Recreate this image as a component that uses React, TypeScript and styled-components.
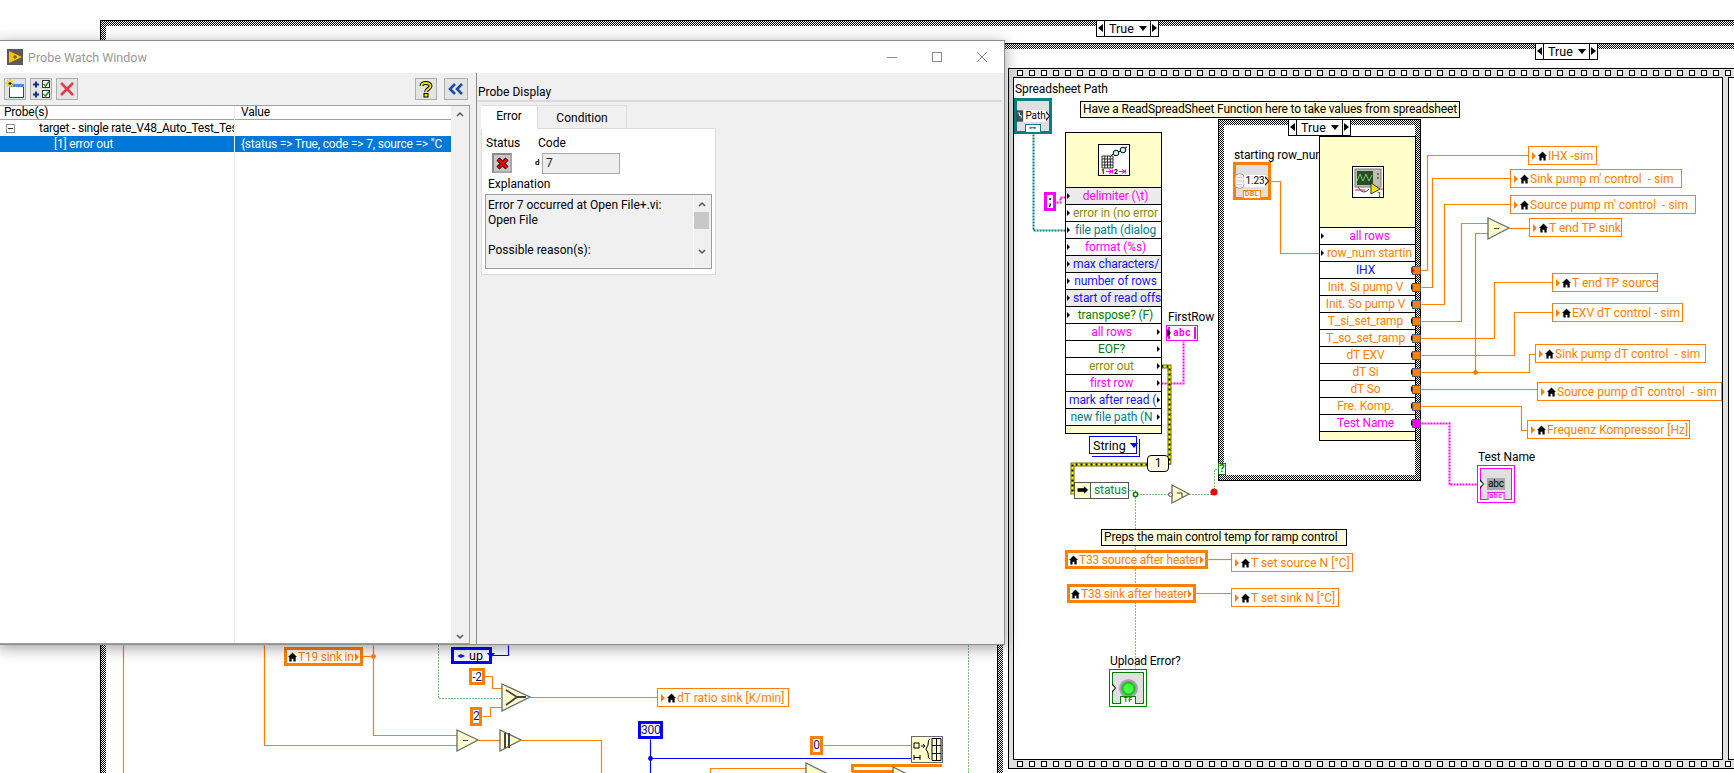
import React from "react";
import styled, { createGlobalStyle, css } from "styled-components";

const UI_FONT = `Roboto, "Noto Sans", sans-serif`;
const ORANGE = "#ff7f00";
const MAGENTA = "#ff00ff";
const BLUE = "#1414ff";
const GREEN = "#007f00";
const TEAL = "#008080";
const OLIVE = "#8c8c00";
const CHECKER = "repeating-conic-gradient(#000 0 25%, #fff 0 50%) 0 0 / 2px 2px";

const GlobalStyle = createGlobalStyle`
  html, body { margin: 0; padding: 0; background: #fff; overflow: hidden; }
  body { font-family: ${UI_FONT}; font-size: 12px; color: #000; }
`;

// anything on the block diagram sits at its own place on the canvas
type At = { $x: number; $y: number };
type Box = At & { $w?: number; $h?: number };
const placed = css<Box>`
  position: absolute;
  left: ${(p) => p.$x}px;
  top: ${(p) => p.$y}px;
  ${(p) => (p.$w !== undefined ? `width: ${p.$w}px;` : "")}
  ${(p) => (p.$h !== undefined ? `height: ${p.$h}px;` : "")}
  box-sizing: border-box;
`;

// LabVIEW's app font runs a little narrow
const diagramText = css`
  font-size: 12px;
  letter-spacing: -0.1px;
`;

const Canvas = styled.div`
  position: relative;
  width: 1734px;
  height: 773px;
  overflow: hidden;
  background: #fff;
`;

// case structure frame
const CaseFrame = styled.div<Box>`
  ${placed}
  border: 1px solid #000;
  background: ${CHECKER};
  &::after {
    content: "";
    position: absolute;
    inset: 5px;
    background: #fff;
  }
`;

// sequence structure
const FilmFrame = styled.div<Box>`
  ${placed}
  display: flex;
  flex-direction: column;
  border: 1px solid #000;
  background: #e0e0e0;
`;

const FilmBand = styled.div`
  height: 8px;
  flex: none;
  background-image:
    repeating-linear-gradient(90deg, #fff 0 4px, transparent 4px 12px),
    repeating-linear-gradient(90deg, #000 0 6px, transparent 6px 12px);
  background-size: 100% 4px, 100% 6px;
  background-position: 9px 2px, 8px 1px;
  background-repeat: no-repeat;
`;

const FilmPanes = styled.div`
  flex: 1;
  display: flex;
  gap: 5px;
  padding: 0 5px 0 4px;
`;

const FilmPane = styled.div<{ $w: number }>`
  width: ${(p) => p.$w}px;
  flex: none;
  box-sizing: border-box;
  border: 1px solid #000;
  background: #fff;
`;

const CaseSelector = styled.div<At>`
  ${placed}
  display: flex;
  height: 17px;
  border: 1px solid #000;
  background: #fff;
  font-size: 12.5px;
  line-height: 15px;
`;

const SelectorStep = styled.span<{ $dir: "left" | "right" }>`
  width: 7px;
  flex: none;
  position: relative;
  ${(p) => (p.$dir === "left" ? "border-right: 1px solid #000;" : "border-left: 1px solid #000;")}
  &::after {
    content: "";
    position: absolute;
    top: 3px;
    left: 1px;
    border-block: 4px solid transparent;
    ${(p) => (p.$dir === "left" ? "border-right: 5px solid #000;" : "border-left: 5px solid #000;")}
  }
`;

const SelectorValue = styled.span`
  width: 45px;
  padding-left: 4px;
  box-sizing: border-box;
  display: flex;
  align-items: center;
  justify-content: space-between;
  padding-right: 3px;
`;

const DownMark = styled.i<{ $color?: string }>`
  display: block;
  flex: none;
  border-inline: 4px solid transparent;
  border-top: 5px solid ${(p) => p.$color ?? "#000"};
`;

const Comment = styled.div<Box>`
  ${placed}
  ${diagramText}
  letter-spacing: -0.15px;
  background: #ffffdc;
  border: 1px solid #000;
  line-height: 15px;
  padding-left: 2px;
  white-space: nowrap;
  overflow: hidden;
`;

const FreeLabel = styled.div<At>`
  ${placed}
  ${diagramText}
  line-height: 16px;
  white-space: nowrap;
`;

// function / subVI in expanded view
const Node = styled.div<Box>`
  ${placed}
  ${diagramText}
  display: flex;
  flex-direction: column;
  border: 1px solid #000;
  background: #ffffcc;
`;

const NodeHead = styled.div<{ $h: number }>`
  height: ${(p) => p.$h}px;
  flex: none;
  display: flex;
  align-items: center;
  justify-content: center;
  border-bottom: 1px solid #000;
  box-sizing: border-box;
`;

const NodeIcon = styled.div`
  width: 32px;
  height: 32px;
  background: #fff;
  border: 1px solid #000;
  box-sizing: border-box;
  svg { display: block; }
`;

const TermRow = styled.div<{ $color: string; $shade?: boolean; $out?: boolean }>`
  height: 17px;
  flex: none;
  box-sizing: border-box;
  position: relative;
  border-bottom: 1px solid #000;
  background: ${(p) => (p.$shade ? "#ebebeb" : "#fff")};
  color: ${(p) => p.$color};
  text-align: center;
  line-height: 16px;
  white-space: pre;
  overflow: hidden;
  padding: ${(p) => (p.$out ? "0 7px 0 3px" : "0 3px 0 7px")};
  &::before {
    content: "";
    position: absolute;
    top: 5px;
    ${(p) => (p.$out ? "right: 1px;" : "left: 1px;")}
    border-left: 3px solid #000;
    border-block: 3px solid transparent;
  }
`;

// terminal on the diagram in icon view
const TermIcon = styled.div<Box & { $color: string; $thick?: boolean }>`
  ${placed}
  border: ${(p) => (p.$thick ? 3 : 1)}px solid ${(p) => p.$color};
  padding: ${(p) => (p.$thick ? 0 : 2)}px;
  background: #fff;
`;

const TermFace = styled.div<{ $color: string; $thick?: boolean }>`
  position: relative;
  height: 100%;
  box-sizing: border-box;
  background: #e0e0e0;
  ${(p) => (p.$thick ? "" : `border: 1px solid ${p.$color};`)}
  display: flex;
  align-items: center;
  justify-content: center;
`;

const TermTag = styled.span<{ $color: string }>`
  position: absolute;
  left: 50%;
  bottom: -1px;
  transform: translateX(-50%);
  min-width: 16px;
  height: 8px;
  box-sizing: border-box;
  border: 1px solid ${(p) => p.$color};
  border-bottom: none;
  background: #fff;
  color: ${(p) => p.$color};
  font-size: 7px;
  line-height: 7px;
  font-weight: 700;
  text-align: center;
  letter-spacing: 0.5px;
  padding: 0 1px;
`;

const TermArrow = styled.i<{ $side: "left" | "right" }>`
  position: absolute;
  top: 50%;
  margin-top: -5px;
  ${(p) => (p.$side === "left" ? "left: -1px;" : "right: -1px;")}
  border-block: 5px solid transparent;
  border-left: 4px solid #000;
  &::after {
    content: "";
    position: absolute;
    top: -3px;
    left: -4px;
    border-block: 3px solid transparent;
    border-left: 3px solid #fff;
  }
`;

const ValueChip = styled.span<{ $gray?: boolean; $shift?: number }>`
  background: ${(p) => (p.$gray ? "#a8a8a8" : "#fff")};
  font-size: 10px;
  line-height: 12px;
  padding: 0 1px;
  letter-spacing: -0.1px;
  ${(p) => (p.$shift ? `margin-right: ${p.$shift}px;` : "")}
`;

const Led = styled.span`
  width: 19px;
  height: 19px;
  border-radius: 50%;
  background: radial-gradient(circle, #46ff46 0 28%, #10c010 45%, #9a9a9a 55%, #c6c6c6 85%, transparent 100%);
`;

// local variable, thin border when written to and thick when read
const LocalVar = styled.div<Box & { $read?: boolean }>`
  ${placed}
  display: flex;
  align-items: center;
  gap: 1px;
  height: 19px;
  padding: 0 ${(p) => (p.$read ? 1 : 3)}px;
  border: ${(p) => (p.$read ? 3 : 1)}px solid ${ORANGE};
  background: #fff;
  color: ${ORANGE};
  font-size: 12px;
  letter-spacing: ${(p) => (p.$read ? -0.2 : 0)}px;
  white-space: pre;
`;

const Pointer = styled.i`
  flex: none;
  border-block: 4px solid transparent;
  border-left: 4px solid ${ORANGE};
  margin-right: 1px;
`;

const Constant = styled.div<Box & { $color: string }>`
  ${placed}
  border: 3px solid ${(p) => p.$color};
  background: #fff;
  color: #14147a;
  font-size: 12px;
  line-height: 13px;
  text-align: center;
  letter-spacing: -0.2px;
  overflow: hidden;
`;

const EnumBox = styled.div<Box & { $double?: boolean }>`
  ${placed}
  display: flex;
  align-items: center;
  gap: 4px;
  background: #fff;
  border: ${(p) => (p.$double ? 1 : 3)}px solid #0000ff;
  ${(p) => (p.$double ? "box-shadow: 2px 2px 0 -0px #fff, 3px 3px 0 0 #0000ff;" : "")}
  font-size: 12.5px;
  padding: 0 4px 0 3px;
  justify-content: space-between;
`;

const EnumSpin = styled.span`
  color: #0000ff;
  font-size: 8px;
  line-height: 8px;
`;

const StringSwatch = styled.div<Box>`
  ${placed}
  border: 3px solid ${MAGENTA};
  background: #fff;
  text-align: center;
  font-size: 12px;
  font-weight: 700;
  line-height: 12px;
`;

const ArrayIndicator = styled.div<Box>`
  ${placed}
  border: 1px solid ${MAGENTA};
  padding: 1px;
  background: #fff;
  display: flex;
`;

const ArrayInner = styled.div`
  flex: 1;
  position: relative;
  border-inline: 2px solid ${MAGENTA};
  color: ${MAGENTA};
  font-size: 10px;
  line-height: 12px;
  font-weight: 700;
  text-align: center;
  letter-spacing: 0.5px;
  &::before {
    content: "";
    position: absolute;
    left: -3px;
    top: 2px;
    border-block: 4px solid transparent;
    border-left: 4px solid #000;
  }
`;

const Unbundle = styled.div<Box>`
  ${placed}
  ${diagramText}
  display: flex;
  border: 1px solid #555;
  background: #fff;
  color: #0a8a3a;
`;

const UnbundleHead = styled.span`
  width: 15px;
  flex: none;
  border-right: 1px solid #555;
  background: #ffffcc;
  color: #000;
  font-weight: 700;
  line-height: 14px;
  font-size: 13px;
  text-align: center;
`;

const UnbundleField = styled.span`
  flex: 1;
  padding-left: 3px;
  line-height: 15px;
`;

const CaseNumber = styled.div<Box>`
  ${placed}
  border: 1px solid #000;
  border-radius: 4px;
  background: #ffffe6;
  font-size: 12px;
  line-height: 15px;
  text-align: center;
`;

const ConditionMark = styled.div<Box>`
  ${placed}
  border: 1px solid ${GREEN};
  background: #fff;
  color: ${GREEN};
  font-size: 11px;
  line-height: 10px;
  font-weight: 700;
  text-align: center;
`;

const Drawing = styled.svg`
  position: absolute;
  left: 0;
  top: 0;
`;

// probe watch window
const ProbeWindow = styled.div`
  position: absolute;
  left: -2px;
  top: 40px;
  width: 1007px;
  height: 605px;
  display: flex;
  flex-direction: column;
  box-sizing: border-box;
  background: #fff;
  border: 1px solid #8c8c8c;
  box-shadow: 0 3px 14px rgba(0, 0, 0, 0.38);
`;

const TitleBar = styled.div`
  height: 32px;
  flex: none;
  display: flex;
  align-items: center;
  padding-left: 8px;
  color: #999;
  font-size: 12.5px;
`;

const TitleText = styled.span`
  margin-left: 5px;
  flex: 1;
`;

const WinButton = styled.span`
  width: 45px;
  height: 30px;
  display: flex;
  align-items: center;
  justify-content: center;
  svg { display: block; }
`;

const WinBody = styled.div`
  flex: 1;
  display: flex;
  min-height: 0;
  background: #f0f0f0;
`;

const ProbeList = styled.div`
  width: 472px;
  flex: none;
  display: flex;
  flex-direction: column;
`;

const Toolbar = styled.div`
  height: 32px;
  flex: none;
  display: flex;
  align-items: center;
  box-sizing: border-box;
  padding: 0 3px 0 5px;
  gap: 4px;
`;

const ToolButton = styled.span<{ $ml?: number; $w?: number }>`
  width: ${(p) => p.$w ?? 22}px;
  height: 22px;
  box-sizing: border-box;
  background: #e4e4e4;
  border: 1px solid #adadad;
  display: flex;
  align-items: center;
  justify-content: center;
  ${(p) => (p.$ml ? `margin-left: ${p.$ml}px;` : "")}
  svg { display: block; }
`;

const ProbeTable = styled.div`
  flex: 1;
  display: grid;
  grid-template-columns: 1fr 18px;
  min-height: 0;
  border: 1px solid #a0a0a0;
  border-left: none;
  background: #fff;
  margin-right: 1px;
`;

const TableBody = styled.div`
  background: #fff;
  position: relative;
`;

const TableRow = styled.div<{ $head?: boolean; $active?: boolean }>`
  display: grid;
  grid-template-columns: 236px 1fr;
  height: ${(p) => (p.$head ? 13 : 16)}px;
  line-height: ${(p) => (p.$head ? 13 : 16)}px;
  font-size: 12px;
  letter-spacing: -0.2px;
  white-space: nowrap;
  ${(p) => p.$head && "border-bottom: 1px solid #a0a0a0; box-sizing: content-box;"}
  ${(p) => p.$active && "background: #0078d7; color: #fff;"}
`;

const TableCell = styled.span<{ $pad: number }>`
  padding-left: ${(p) => p.$pad}px;
  overflow: hidden;
  display: flex;
  align-items: center;
  border-right: 1px solid #e8e8e8;
  &:last-child { border-right: none; }
`;

const Expander = styled.span`
  width: 9px;
  height: 9px;
  flex: none;
  box-sizing: border-box;
  border: 1px solid #919191;
  margin-right: 24px;
  position: relative;
  &::after {
    content: "";
    position: absolute;
    left: 1px;
    right: 1px;
    top: 3px;
    height: 1px;
    background: #333;
  }
`;

const ColumnRule = styled.i`
  position: absolute;
  left: 235px;
  top: 0;
  bottom: 0;
  width: 1px;
  background: #ececec;
`;

const ScrollTrack = styled.div`
  display: flex;
  flex-direction: column;
  align-items: center;
  justify-content: space-between;
  padding: 5px 0 3px;
  background: #f0f0f0;
  svg { display: block; }
`;

const Splitter = styled.div`
  width: 5px;
  flex: none;
  border-right: 1px solid #8c8c8c;
`;

const DisplayPane = styled.div`
  flex: 1;
  display: flex;
  flex-direction: column;
  min-width: 0;
`;

const DisplayTitle = styled.div`
  height: 29px;
  flex: none;
  box-sizing: border-box;
  border-bottom: 2px solid #d9d9d9;
  font-size: 12px;
  line-height: 38px;
  padding-left: 1px;
  margin-right: 2px;
  overflow: hidden;
  white-space: nowrap;
`;

const TabStrip = styled.div`
  display: flex;
  margin: 3px 0 0 4px;
  height: 24px;
  flex: none;
`;

const Tab = styled.span<{ $active?: boolean; $w: number }>`
  width: ${(p) => p.$w}px;
  box-sizing: border-box;
  text-align: center;
  font-size: 12px;
  line-height: ${(p) => (p.$active ? 20 : 24)}px;
  background: ${(p) => (p.$active ? "#fff" : "#f0f0f0")};
  border: 1px solid #dcdcdc;
  border-bottom: none;
  ${(p) => p.$active && "border-right: none; border-left: none; position: relative; z-index: 1;"}
`;

const TabPanel = styled.div`
  width: 235px;
  height: 147px;
  margin-left: 4px;
  margin-top: -1px;
  box-sizing: border-box;
  background: #fff;
  border: 1px solid #dcdcdc;
  padding: 6px 3px 0 3px;
  font-size: 12px;
`;

const FieldHeads = styled.div`
  display: grid;
  grid-template-columns: 52px 1fr;
  line-height: 16px;
  padding-left: 1px;
`;

const FieldValues = styled.div`
  display: flex;
  align-items: center;
  height: 22px;
  margin-top: 1px;
  padding-left: 7px;
`;

const StatusLight = styled.span`
  width: 20px;
  height: 20px;
  flex: none;
  box-sizing: border-box;
  border: 2px solid;
  border-color: #8a8a8a #a8a8a8 #a8a8a8 #8a8a8a;
  background: #c8c8c8;
  display: flex;
  align-items: center;
  justify-content: center;
`;

const RadixMark = styled.span`
  margin-left: 23px;
  width: 7px;
  font-size: 8px;
  line-height: 8px;
  font-weight: 700;
`;

const CodeField = styled.span`
  width: 78px;
  height: 21px;
  box-sizing: border-box;
  background: #eee;
  border: 1px solid #a8a8a8;
  padding-left: 3px;
  line-height: 19px;
  color: #222;
`;

const FieldCaption = styled.div`
  line-height: 16px;
  height: 18px;
  box-sizing: border-box;
  padding: 2px 0 0 3px;
`;

const ExplainBox = styled.div`
  height: 75px;
  margin-top: 2px;
  box-sizing: border-box;
  display: flex;
  background: #f0f0f0;
  border: 1px solid #9c9c9c;
  line-height: 15px;
  white-space: pre;
`;

const ExplainText = styled.div`
  flex: 1;
  padding: 3px 0 0 2px;
`;

const ExplainScroll = styled.div`
  width: 18px;
  flex: none;
  border-left: 1px solid #fff;
  display: flex;
  flex-direction: column;
  align-items: flex-start;
  padding-top: 6px;
  box-sizing: border-box;
  svg { display: block; margin-left: 4px; }
`;

const ExplainThumb = styled.i`
  display: block;
  width: 15px;
  height: 17px;
  margin: 5px 0 20px;
  background: #c8c8c8;
`;

// icons
const House = () => (
  <svg width="9" height="10" viewBox="0 0 10 10" style={{ flex: "none" }}>
    <path d="M5 0 L10 5 L8.5 5 L8.5 10 L6 10 L6 7 L4 7 L4 10 L1.5 10 L1.5 5 L0 5 Z" fill="#000" />
  </svg>
);

const Chevron = ({ up, stroke = "#555" }: { up?: boolean; stroke?: string }) => (
  <svg width="8" height="6" viewBox="0 0 8 6">
    <path d={up ? "M1 5 L4 2 L7 5" : "M1 1 L4 4 L7 1"} fill="none" stroke={stroke} strokeWidth="1.5" />
  </svg>
);

const LabviewGlyph = () => (
  <svg width="16" height="16" viewBox="0 0 16 16">
    <rect width="16" height="16" fill="#5a5a5a" />
    <path d="M2 2 L15 8 L2 14 Z" fill="#f5c400" />
    <path d="M6 8 H10 M8 6 V10" stroke="#5a4a00" strokeWidth="1" />
  </svg>
);

const NewProbeGlyph = () => (
  <svg width="20" height="20" viewBox="0 0 20 20">
    <rect x="4.5" y="5.5" width="14" height="13" fill="#fff" stroke="#1a4fa0" />
    <rect x="4" y="5" width="15" height="3" fill="#3f8fe0" />
    <path d="M5 0 V9 M0.5 4.5 H9.5 M2 1.5 L8 7.5 M8 1.5 L2 7.5" stroke="#e6d800" strokeWidth="1.3" />
    <path d="M5 3 V6 M3.5 4.5 H6.5" stroke="#000" strokeWidth="1" />
  </svg>
);

const AddChecksGlyph = () => (
  <svg width="20" height="20" viewBox="0 0 20 20">
    <g fill="none" strokeWidth="2">
      <path d="M2 5.5 H8 M5 2.5 V8.5 M2 15.5 H8 M5 12.5 V18.5" stroke="#10308c" />
    </g>
    <rect x="11.5" y="1.5" width="7" height="7" fill="#fff" stroke="#333" />
    <rect x="11.5" y="11.5" width="7" height="7" fill="#fff" stroke="#333" />
    <path d="M12.5 5 L14.5 7 L18 2.5 M12.5 15 L14.5 17 L18 12.5" fill="none" stroke="#12a012" strokeWidth="1.6" />
  </svg>
);

const RemoveGlyph = () => (
  <svg width="16" height="16" viewBox="0 0 16 16">
    <path d="M2 2 L14 14 M14 2 L2 14" stroke="#e8384c" strokeWidth="2.6" />
  </svg>
);

const HelpGlyph = () => (
  <svg width="18" height="18" viewBox="0 0 18 18">
    <path
      d="M4.5 6 C4.5 2.2 13.5 2 13.5 6 C13.5 9 9 9 9 12"
      fill="none"
      stroke="#000"
      strokeWidth="4"
    />
    <path
      d="M4.5 6 C4.5 2.2 13.5 2 13.5 6 C13.5 9 9 9 9 12"
      fill="none"
      stroke="#f2e200"
      strokeWidth="2"
    />
    <rect x="7" y="13.5" width="4" height="3.5" fill="#f2e200" stroke="#000" />
  </svg>
);

const CollapseGlyph = () => (
  <svg width="16" height="14" viewBox="0 0 16 14">
    <path d="M7 2 L2 7 L7 12 M14 2 L9 7 L14 12" fill="none" stroke="#1c4ea8" strokeWidth="2.6" />
  </svg>
);

const ErrorCross = () => (
  <svg width="13" height="13" viewBox="0 0 13 13">
    <path d="M2 2 L11 11 M11 2 L2 11" stroke="#000" strokeWidth="4.4" />
    <path d="M2 2 L11 11 M11 2 L2 11" stroke="#f00000" strokeWidth="2.8" />
  </svg>
);

const ReadSheetIcon = () => (
  <svg width="30" height="30" viewBox="0 0 30 30">
    <path d="M3 11 H14 M3 14 H14 M3 17 H14 M3 20 H14 M3 23 H14 M3 11 V23 M5.75 11 V23 M8.5 11 V23 M11.25 11 V23 M14 11 V23" stroke="#000" strokeWidth="0.8" />
    <circle cx="17" cy="8" r="2.8" fill="#bff4f4" stroke="#000" />
    <circle cx="24" cy="5" r="2.8" fill="#bff4f4" stroke="#000" />
    <path d="M19.5 7 L21.5 6 M14 9 L12 11 M26 3 L28 2" stroke="#000" />
    <text x="2" y="29" fontSize="7" fontFamily={UI_FONT} fontWeight="700">1</text>
    <path d="M7 26.5 H13 M10 24.5 L13 26.5 L10 28.5 M13.5 24.5 V28.5" stroke="#f0f" fill="none" />
    <text x="15" y="29" fontSize="7" fontFamily={UI_FONT} fontWeight="700">2</text>
    <path d="M20 26.5 H26 M23 24.5 L26 26.5 L23 28.5 M26.5 24.5 V28.5" stroke="#f0f" fill="none" />
  </svg>
);

const SubViIcon = () => (
  <svg width="30" height="30" viewBox="0 0 30 30">
    <rect x="2" y="2" width="26" height="18" fill="#c0c0b0" stroke="#777" />
    <rect x="4" y="4" width="16" height="14" fill="#2e4a28" />
    <path d="M4 14 L7 7 L10 14 L13 7 L16 14 L19 8" fill="none" stroke="#5fdc5f" />
    <circle cx="25" cy="7" r="1" fill="#555" />
    <circle cx="25" cy="11" r="1" fill="#555" />
    <path d="M5 20 Q10 29 16 22" fill="none" stroke="#2030c0" />
    <path d="M2 23 H12" stroke="#d02020" />
    <path d="M18 16 L27 22 L18 27 Z" fill="#f2e400" stroke="#333" />
    <path d="M27 22 H30" stroke="#d02020" />
    <text x="24" y="30" fontSize="8" fontFamily={UI_FONT}>1</text>
  </svg>
);

const PathGlyph = () => (
  <svg width="7" height="12" viewBox="0 0 8 13" style={{ flex: "none", marginRight: 1 }}>
    <rect width="8" height="13" fill="#33595c" />
    <path d="M2 3 H4 V6 H6 V9" fill="none" stroke="#fff" />
  </svg>
);

const NumSpin = () => (
  <svg width="9" height="16" viewBox="0 0 10 16" style={{ flex: "none" }}>
    <rect width="10" height="16" rx="4" fill="#f4f4f4" stroke="#9a9a9a" />
    <path d="M2 4 H8 M2 8 H8 M2 12 H8" stroke="#c4c4c4" />
  </svg>
);

const READ_TERMINALS = [
  { label: "delimiter (\\t)", color: MAGENTA, shade: true },
  { label: "error in (no error", color: OLIVE },
  { label: "file path (dialog", color: TEAL },
  { label: "format (%s)", color: MAGENTA },
  { label: "max characters/", color: BLUE, shade: true },
  { label: "number of rows", color: BLUE },
  { label: "start of read offs", color: BLUE, shade: true },
  { label: "transpose? (F)", color: GREEN },
  { label: "all rows", color: MAGENTA, out: true },
  { label: "EOF?", color: GREEN, out: true },
  { label: "error out", color: OLIVE, out: true },
  { label: "first row", color: MAGENTA, out: true },
  { label: "mark after read (", color: BLUE, out: true },
  { label: "new file path (N", color: TEAL, out: true },
];

const SUB_TERMINALS = [
  { label: "all rows", color: MAGENTA },
  { label: "row_num startin", color: ORANGE },
  { label: "IHX", color: BLUE, out: true },
  { label: "Init. Si pump V", color: ORANGE, out: true },
  { label: "Init. So pump V", color: ORANGE, out: true },
  { label: "T_si_set_ramp", color: ORANGE, out: true },
  { label: "T_so_set_ramp", color: ORANGE, out: true },
  { label: "dT EXV", color: ORANGE, out: true },
  { label: "dT Si", color: ORANGE, out: true },
  { label: "dT So", color: ORANGE, out: true },
  { label: "Fre. Komp.", color: ORANGE, out: true },
  { label: "Test Name", color: MAGENTA, out: true },
];

const WRITE_LOCALS = [
  { label: "IHX -sim", x: 1528, y: 146, w: 69 },
  { label: "Sink pump m' control  - sim", x: 1510, y: 169, w: 172 },
  { label: "Source pump m' control  - sim", x: 1510, y: 195, w: 186 },
  { label: "T end TP sink", x: 1529, y: 218, w: 93 },
  { label: "T end TP source", x: 1552, y: 273, w: 106 },
  { label: "EXV dT control - sim", x: 1552, y: 303, w: 131 },
  { label: "Sink pump dT control  - sim", x: 1535, y: 344, w: 171 },
  { label: "Source pump dT control  - sim", x: 1537, y: 382, w: 185 },
  { label: "Frequenz Kompressor [Hz]", x: 1527, y: 420, w: 163 },
  { label: "T set source N [°C]", x: 1231, y: 553, w: 122 },
  { label: "T set sink N [°C]", x: 1231, y: 588, w: 108 },
  { label: "dT ratio sink [K/min]", x: 657, y: 688, w: 132 },
];

const READ_LOCALS = [
  { label: "T33 source after heater", x: 1065, y: 550, w: 143 },
  { label: "T38 sink after heater", x: 1067, y: 584, w: 129 },
  { label: "T19 sink in", x: 284, y: 647, w: 79 },
];

type Pt = [number, number];

const ORANGE_WIRES: Pt[][] = [
  [[1271, 181], [1280, 181], [1280, 253], [1319, 253]],
  [[1421, 270], [1427, 270], [1427, 155], [1528, 155]],
  [[1421, 287], [1432, 287], [1432, 178], [1510, 178]],
  [[1421, 304], [1444, 304], [1444, 204], [1510, 204]],
  [[1421, 321], [1461, 321], [1461, 223], [1488, 223]],
  [[1421, 338], [1494, 338], [1494, 282], [1552, 282]],
  [[1421, 355], [1514, 355], [1514, 312], [1552, 312]],
  [[1421, 372], [1529, 372], [1529, 354], [1535, 354]],
  [[1475, 372], [1475, 233], [1488, 233]],
  [[1509, 228], [1529, 228]],
  [[1421, 389], [1537, 389]],
  [[1421, 406], [1521, 406], [1521, 430], [1527, 430]],
  [[1208, 559], [1231, 559]],
  [[1196, 593], [1231, 593]],
  [[363, 656], [373, 656]],
  [[373, 645], [373, 735], [457, 735]],
  [[264, 645], [264, 745], [457, 745]],
  [[123, 645], [123, 773]],
  [[478, 740], [500, 740]],
  [[521, 740], [601, 740], [601, 773]],
  [[485, 676], [492, 676], [492, 688], [502, 688]],
  [[482, 716], [490, 716], [490, 707], [502, 707]],
  [[530, 697], [657, 697]],
  [[823, 745], [911, 745]],
  [[710, 773], [710, 768], [806, 768]],
];

const BLUE_WIRES: Pt[][] = [
  [[492, 655], [508, 655], [508, 645]],
  [[650, 739], [650, 773]],
  [[650, 758], [911, 758]],
];

const GREEN_WIRES: Pt[][] = [
  [[438, 645], [438, 698], [502, 698]],
  [[968, 645], [968, 773]],
  [[1129, 490], [1135, 490], [1135, 494], [1168, 494]],
  [[1189, 494], [1214, 494], [1214, 469], [1218, 469]],
  [[1135, 494], [1135, 669]],
];

const MAGENTA_WIRES: Pt[][] = [
  [[1161, 383], [1183, 383], [1183, 341]],
  [[1056, 202], [1060, 202], [1060, 197], [1065, 197]],
  [[1421, 423], [1449, 423], [1449, 484], [1477, 484]],
];

const ERROR_WIRES: Pt[][] = [
  [[1161, 366], [1169, 366], [1169, 464]],
  [[1147, 464], [1072, 464], [1072, 492], [1074, 492]],
];

const GATES = [
  "1488,218 1509,228 1488,239",
  "1172,485 1189,494 1172,503",
  "457,730 478,740 457,751",
  "500,730 521,740 500,751",
  "502,684 530,697 502,711",
  "806,763 828,774 806,785",
  "893,767 915,778 893,789",
];

const TUNNEL_ROWS = [270, 287, 304, 321, 338, 355, 372, 389, 406, 423];

const toPoints = (w: Pt[]) => w.map(([x, y]) => `${x + 0.5},${y + 0.5}`).join(" ");

const Wires = ({ wires, ...rest }: { wires: Pt[][] } & React.SVGProps<SVGGElement>) => (
  <g fill="none" {...rest}>
    {wires.map((w, i) => (
      <polyline key={i} points={toPoints(w)} />
    ))}
  </g>
);

const BlockDiagram = () => (
  <Drawing width="1734" height="773" viewBox="0 0 1734 773">
    <Wires wires={ORANGE_WIRES} stroke={ORANGE} strokeWidth="1.2" />
    <Wires wires={BLUE_WIRES} stroke="#0000ff" strokeWidth="1.2" />
    <Wires wires={GREEN_WIRES} stroke={GREEN} strokeWidth="1" strokeDasharray="1 2" />
    <Wires wires={[[[1033, 134], [1033, 230], [1065, 230]]]} stroke={TEAL} strokeWidth="2" strokeDasharray="2 1" />
    <Wires wires={MAGENTA_WIRES} stroke={MAGENTA} strokeWidth="2" strokeDasharray="2 1" />
    <Wires wires={ERROR_WIRES} stroke="#6e6e00" strokeWidth="4" />
    <Wires wires={ERROR_WIRES} stroke="#ffff00" strokeWidth="2" />
    <Wires wires={ERROR_WIRES} stroke="#000" strokeWidth="2" strokeDasharray="2 3" />
    <path d="M852.5 772 V765.5 H942" fill="none" stroke={ORANGE} strokeWidth="3" />
    <path d="M852 771.5 H893" fill="none" stroke={ORANGE} strokeWidth="3" />

    {GATES.map((g) => (
      <polygon key={g} points={g} fill="#ffffcc" stroke="#6a6a6a" strokeWidth="1.3" />
    ))}
    <path d="M1494 228.5 H1499 M463 740.5 H468" stroke="#444" />
    <path d="M1177 493 H1182 V497" fill="none" stroke="#333" />
    <path d="M505 733 V748 M509 733 V748" stroke="#444" strokeWidth="2" />
    <path d="M506 690 L517 697 L506 705 M517 697 H526" fill="none" stroke="#444" strokeWidth="1.8" />

    <circle cx="1170.5" cy="494.5" r="2" fill="#fff" stroke="#555" />
    <circle cx="1135.5" cy="494.5" r="2.2" fill="#fff" stroke={GREEN} strokeWidth="1.4" />
    <circle cx="1214" cy="492" r="3.6" fill="#f00000" />
    <circle cx="1475.5" cy="372.5" r="2.4" fill={ORANGE} />
    <circle cx="373.5" cy="656.5" r="2.4" fill={ORANGE} />
    <circle cx="650.5" cy="758.5" r="2.4" fill="#0000ff" />

    {/* initialize array */}
    <rect x="911.5" y="736.5" width="31" height="26" fill="#ffffcc" stroke="#6a6a6a" />
    <path d="M914 743 H919 V748 H914 Z M921 746 H925 M923 744 L925 746 L923 748 M914 755 V760 M914 757.5 H920 M920 755 V760" fill="none" stroke="#000" />
    <path d="M932 738.5 H941 V760.5 H932 Z M932 745.5 H941 M932 753.5 H941 M936.5 738.5 V760.5 M930 739 Q928 739 928 745 L926 749 L928 753 Q928 759 930 759" fill="none" stroke="#000" />
  </Drawing>
);

const TunnelLayer = () => (
  <Drawing width="1734" height="773" viewBox="0 0 1734 773">
    {TUNNEL_ROWS.map((y) => (
      <rect
        key={y}
        x="1412.5"
        y={y - 3.5}
        width="8"
        height="8"
        fill={y === 423 ? MAGENTA : ORANGE}
        stroke="#555"
        shapeRendering="crispEdges"
      />
    ))}
    <path d="M1411 268 L1415 270.5 L1411 273 Z" fill="#f00000" />
  </Drawing>
);

const WindowControls = () => (
  <>
    <WinButton>
      <svg width="10" height="10" viewBox="0 0 10 10">
        <path d="M0 5.5 H10" stroke="#8a8a8a" />
      </svg>
    </WinButton>
    <WinButton>
      <svg width="10" height="10" viewBox="0 0 10 10">
        <rect x="0.5" y="0.5" width="9" height="9" fill="none" stroke="#8a8a8a" />
      </svg>
    </WinButton>
    <WinButton>
      <svg width="10" height="10" viewBox="0 0 10 10">
        <path d="M0 0 L10 10 M10 0 L0 10" stroke="#8a8a8a" />
      </svg>
    </WinButton>
  </>
);

const ProbeWatch = () => (
  <ProbeWindow>
    <TitleBar>
      <LabviewGlyph />
      <TitleText>Probe Watch Window</TitleText>
      <WindowControls />
    </TitleBar>
    <WinBody>
      <ProbeList>
        <Toolbar>
          <ToolButton><NewProbeGlyph /></ToolButton>
          <ToolButton><AddChecksGlyph /></ToolButton>
          <ToolButton><RemoveGlyph /></ToolButton>
          <ToolButton $ml={333}><HelpGlyph /></ToolButton>
          <ToolButton $ml={3} $w={24}><CollapseGlyph /></ToolButton>
        </Toolbar>
        <ProbeTable>
          <TableBody>
            <ColumnRule />
            <TableRow $head>
              <TableCell $pad={5}>Probe(s)</TableCell>
              <TableCell $pad={6}>Value</TableCell>
            </TableRow>
            <TableRow>
              <TableCell $pad={7}>
                <Expander />
                target - single rate_V48_Auto_Test_Tes
              </TableCell>
              <TableCell $pad={6} />
            </TableRow>
            <TableRow $active>
              <TableCell $pad={55}>[1] error out</TableCell>
              <TableCell $pad={6}>{'{status => True, code => 7, source => "C'}</TableCell>
            </TableRow>
          </TableBody>
          <ScrollTrack>
            <Chevron up />
            <Chevron />
          </ScrollTrack>
        </ProbeTable>
      </ProbeList>
      <Splitter />
      <DisplayPane>
        <DisplayTitle>Probe Display</DisplayTitle>
        <TabStrip>
          <Tab $active $w={56}>Error</Tab>
          <Tab $w={90}>Condition</Tab>
        </TabStrip>
        <TabPanel>
          <FieldHeads>
            <span>Status</span>
            <span>Code</span>
          </FieldHeads>
          <FieldValues>
            <StatusLight><ErrorCross /></StatusLight>
            <RadixMark>d</RadixMark>
            <CodeField>7</CodeField>
          </FieldValues>
          <FieldCaption>Explanation</FieldCaption>
          <ExplainBox>
            <ExplainText>{"Error 7 occurred at Open File+.vi:\nOpen File\n\nPossible reason(s):"}</ExplainText>
            <ExplainScroll>
              <Chevron up />
              <ExplainThumb />
              <Chevron />
            </ExplainScroll>
          </ExplainBox>
        </TabPanel>
      </DisplayPane>
    </WinBody>
  </ProbeWindow>
);

const TrueSelector = ({ x, y }: { x: number; y: number }) => (
  <CaseSelector $x={x} $y={y}>
    <SelectorStep $dir="left" />
    <SelectorValue>
      True
      <DownMark />
    </SelectorValue>
    <SelectorStep $dir="right" />
  </CaseSelector>
);

export default function App() {
  return (
    <Canvas>
      <GlobalStyle />
      <CaseFrame $x={100} $y={20} $w={1700} $h={800} />
      <CaseFrame $x={997} $y={43} $w={800} $h={800} />
      <FilmFrame $x={1008} $y={68} $w={800} $h={701}>
        <FilmBand />
        <FilmPanes>
          <FilmPane $w={710} />
          <FilmPane $w={70} />
        </FilmPanes>
        <FilmBand />
      </FilmFrame>
      <CaseFrame $x={1218} $y={119} $w={203} $h={362} />
      <TrueSelector x={1096} y={20} />
      <TrueSelector x={1535} y={43} />
      <TrueSelector x={1288} y={119} />

      <BlockDiagram />

      <FreeLabel $x={1015} $y={81}>Spreadsheet Path</FreeLabel>
      <TermIcon $x={1014} $y={98} $w={38} $h={36} $color="#008080" $thick>
        <TermFace $color="#008080" $thick>
          <PathGlyph />
          <ValueChip $shift={3}>Path</ValueChip>
          <TermArrow $side="right" />
          <TermTag $color="#008080">⊶</TermTag>
        </TermFace>
      </TermIcon>
      <Comment $x={1080} $y={101} $w={380} $h={17}>
        Have a ReadSpreadSheet Function here to take values from spreadsheet
      </Comment>
      <StringSwatch $x={1044} $y={192} $w={12} $h={19}>;</StringSwatch>

      <Node $x={1065} $y={132} $w={97} $h={302}>
        <NodeHead $h={55}>
          <NodeIcon><ReadSheetIcon /></NodeIcon>
        </NodeHead>
        {READ_TERMINALS.map((t) => (
          <TermRow key={t.label} $color={t.color} $shade={t.shade} $out={t.out}>{t.label}</TermRow>
        ))}
      </Node>

      <EnumBox $x={1089} $y={436} $w={48} $h={18} $double>
        String
        <DownMark $color="#0000ff" />
      </EnumBox>
      <CaseNumber $x={1147} $y={455} $w={22} $h={17}>1</CaseNumber>
      <Unbundle $x={1074} $y={482} $w={55} $h={17}>
        <UnbundleHead>➡</UnbundleHead>
        <UnbundleField>status</UnbundleField>
      </Unbundle>

      <FreeLabel $x={1168} $y={309}>FirstRow</FreeLabel>
      <ArrayIndicator $x={1166} $y={325} $w={32} $h={16}>
        <ArrayInner>abc</ArrayInner>
      </ArrayIndicator>

      <FreeLabel $x={1234} $y={147}>starting row_num</FreeLabel>
      <TermIcon $x={1233} $y={162} $w={38} $h={38} $color={ORANGE} $thick>
        <TermFace $color={ORANGE} $thick>
          <NumSpin />
          <ValueChip $shift={3}>1.23</ValueChip>
          <TermArrow $side="right" />
          <TermTag $color={ORANGE}>DBL</TermTag>
        </TermFace>
      </TermIcon>

      <Node $x={1319} $y={136} $w={97} $h={305}>
        <NodeHead $h={91}>
          <NodeIcon><SubViIcon /></NodeIcon>
        </NodeHead>
        {SUB_TERMINALS.map((t) => (
          <TermRow key={t.label} $color={t.color} $out={t.out}>{t.label}</TermRow>
        ))}
      </Node>
      <ConditionMark $x={1218} $y={463} $w={8} $h={12}>?</ConditionMark>
      <TunnelLayer />

      {WRITE_LOCALS.map((l) => (
        <LocalVar key={l.label} $x={l.x} $y={l.y} $w={l.w}>
          <Pointer />
          <House />
          {l.label}
        </LocalVar>
      ))}
      {READ_LOCALS.map((l) => (
        <LocalVar key={l.label} $read $x={l.x} $y={l.y} $w={l.w}>
          <House />
          {l.label}
          <Pointer />
        </LocalVar>
      ))}

      <Comment $x={1101} $y={529} $w={246} $h={17}>
        Preps the main control temp for ramp control
      </Comment>

      <FreeLabel $x={1478} $y={449}>Test Name</FreeLabel>
      <TermIcon $x={1477} $y={465} $w={38} $h={38} $color={MAGENTA}>
        <TermFace $color={MAGENTA}>
          <TermArrow $side="left" />
          <ValueChip $gray>abc</ValueChip>
          <TermTag $color={MAGENTA}>abc</TermTag>
        </TermFace>
      </TermIcon>

      <FreeLabel $x={1110} $y={653}>Upload Error?</FreeLabel>
      <TermIcon $x={1109} $y={669} $w={38} $h={38} $color={GREEN}>
        <TermFace $color={GREEN}>
          <TermArrow $side="left" />
          <Led />
          <TermTag $color={GREEN}>TF</TermTag>
        </TermFace>
      </TermIcon>

      <EnumBox $x={451} $y={647} $w={41} $h={17}>
        <EnumSpin>◂▸</EnumSpin>
        up
        <DownMark $color="#0000ff" />
      </EnumBox>
      <Constant $x={469} $y={668} $w={16} $h={17} $color={ORANGE}>-2</Constant>
      <Constant $x={470} $y={707} $w={12} $h={19} $color={ORANGE}>2</Constant>
      <Constant $x={638} $y={721} $w={25} $h={18} $color="#0000ff">300</Constant>
      <Constant $x={810} $y={736} $w={13} $h={19} $color={ORANGE}>0</Constant>

      <ProbeWatch />
    </Canvas>
  );
}
